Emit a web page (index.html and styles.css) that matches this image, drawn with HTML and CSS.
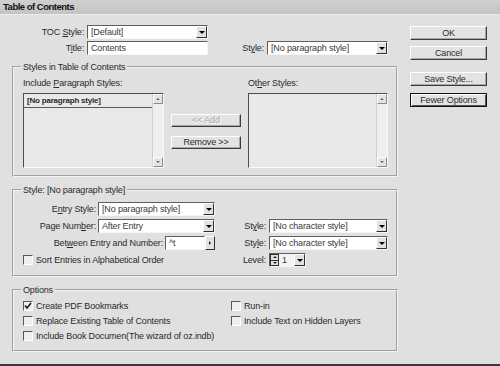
FILE: index.html
```html
<!DOCTYPE html>
<html lang="en">
<head>
    <meta charset="UTF-8">
    <meta name="viewport" content="width=device-width, initial-scale=1.0">
    <title>Table of Contents</title>
    <link rel="stylesheet" href="styles.css">
</head>
<body>
<div class="dialog">
    <div class="titlebar">Table of Contents</div>
    <div class="body">
        <div class="main">
            <!-- TOC style and title -->
            <div class="row">
                <label class="lbl w-toc">TOC <u>S</u>tyle:</label>
                <div class="select w121"><span class="val">[Default]</span><span class="drop"></span></div>
            </div>
            <div class="row">
                <label class="lbl w-toc">T<u>i</u>tle:</label>
                <div class="field w121"><span class="val">Contents</span></div>
                <label class="lbl w-style">St<u>y</u>le:</label>
                <div class="select w121"><span class="val">[No paragraph style]</span><span class="drop"></span></div>
            </div>

            <!-- Styles in Table of Contents -->
            <fieldset class="group g-styles">
                <legend>Styles in Table of Contents</legend>
                <div class="styles-grid">
                    <div class="col">
                        <div class="caption">Include <u>P</u>aragraph Styles:</div>
                        <div class="list">
                            <div class="items">
                                <div class="item">[No paragraph style]</div>
                            </div>
                            <div class="scroll"><span class="arr up"></span><span class="arr down"></span></div>
                        </div>
                    </div>
                    <div class="mid">
                        <button class="btn disabled" type="button">&lt;&lt; Add</button>
                        <button class="btn" type="button">Remove &gt;&gt;</button>
                    </div>
                    <div class="col">
                        <div class="caption">Ot<u>h</u>er Styles:</div>
                        <div class="list">
                            <div class="items"></div>
                            <div class="scroll"><span class="arr up"></span><span class="arr down"></span></div>
                        </div>
                    </div>
                </div>
            </fieldset>

            <!-- Style: [No paragraph style] -->
            <fieldset class="group g-entry">
                <legend>Style: [No paragraph style]</legend>
                <div class="erow">
                    <div class="left">
                        <label class="lbl">E<u>n</u>try Style:</label>
                        <div class="select w117"><span class="val">[No paragraph style]</span><span class="drop"></span></div>
                    </div>
                </div>
                <div class="erow">
                    <div class="left">
                        <label class="lbl">Page Num<u>b</u>er:</label>
                        <div class="select w117"><span class="val">After Entry</span><span class="drop"></span></div>
                    </div>
                    <div class="right">
                        <label class="lbl">St<u>y</u>le:</label>
                        <div class="select w119"><span class="val">[No character style]</span><span class="drop"></span></div>
                    </div>
                </div>
                <div class="erow">
                    <div class="left">
                        <label class="lbl">Bet<u>w</u>een Entry and Number:</label>
                        <div class="field w40"><span class="val">^t</span></div>
                        <span class="flyout"></span>
                    </div>
                    <div class="right">
                        <label class="lbl">Sty<u>l</u>e:</label>
                        <div class="select w119"><span class="val">[No character style]</span><span class="drop"></span></div>
                    </div>
                </div>
                <div class="erow">
                    <div class="left start">
                        <label class="check"><span class="box"></span>Sort Entries in Alphabetical Order</label>
                    </div>
                    <div class="right">
                        <label class="lbl">Level:</label>
                        <div class="level">
                            <span class="spin"><span class="s-up"></span><span class="s-down"></span></span>
                            <span class="val">1</span>
                            <span class="drop"></span>
                        </div>
                    </div>
                </div>
            </fieldset>

            <!-- Options -->
            <fieldset class="group g-opts">
                <legend>Options</legend>
                <div class="opts">
                    <label class="check"><span class="box"><svg width="8" height="8" viewBox="0 0 8 8"><path d="M1 3.5 L3 6 L7 1" fill="none" stroke="#1a1a1a" stroke-width="1.6"/></svg></span>Create PDF Bookmarks</label>
                    <label class="check"><span class="box"></span>Run-in</label>
                    <label class="check"><span class="box"></span>Replace Existing Table of Contents</label>
                    <label class="check"><span class="box"></span>Include Text on Hidden Layers</label>
                    <label class="check"><span class="box"></span>Include Book Documen(The wizard of oz.indb)</label>
                </div>
            </fieldset>
        </div>

        <div class="side">
            <button class="btn" type="button">OK</button>
            <button class="btn cancel" type="button">Cancel</button>
            <button class="btn save" type="button">Save Style...</button>
            <button class="btn default" type="button">Fewer Options</button>
        </div>
    </div>
</div>
</body>
</html>
```

FILE: styles.css
```css
* {
    box-sizing: border-box;
}
body {
    margin: 0;
    background: #e0e0e0;
    font-family: "Liberation Sans", Arial, sans-serif;
    font-size: 9px;
    letter-spacing: -0.15px;
    color: #2a2a2a;
}
u {
    text-decoration: underline;
}
.dialog {
    width: 500px;
    height: 366px;
    background: #e0e0e0;
    border-bottom: 2px solid #3a3a3a;
    overflow: hidden;
}
.titlebar {
    height: 15px;
    line-height: 14px;
    padding-left: 3px;
    font-weight: bold;
    font-size: 9.5px;
    letter-spacing: -0.5px;
    color: #111;
    background: linear-gradient(#d0d0d0, #c3c3c3);
    border-bottom: 1px solid #ececec;
}
.body {
    display: flex;
}
.main {
    margin-left: 12px;
    width: 386px;
    padding-top: 10px;
}
.side {
    margin-left: 12px;
    width: 77px;
    padding-top: 11px;
    display: flex;
    flex-direction: column;
}

/* rows with label + control */
.row {
    display: flex;
    align-items: center;
    height: 14px;
}
.row + .row {
    margin-top: 2px;
}
.lbl {
    text-align: right;
    white-space: nowrap;
}
.w-toc {
    width: 72px;
    margin-right: 3px;
}
.w-style {
    width: 56px;
    margin-right: 3px;
}
.w121 { width: 121px; }
.w119 { width: 119px; }
.w117 { width: 117px; }
.w40 { width: 40px; }

/* inputs and dropdowns */
.select, .field, .level {
    height: 14px;
    display: flex;
    background: #fff;
    border: 1px solid;
    border-color: #5e5e5e #f6f6f6 #f6f6f6 #5e5e5e;
    color: #3a3a3a;
    line-height: 12px;
}
.val {
    flex: 1;
    padding-left: 3px;
    white-space: nowrap;
    overflow: hidden;
}
.drop, .flyout {
    width: 11px;
    flex: none;
    display: flex;
    align-items: center;
    justify-content: center;
    background: #e2e2e2;
    border: 1px solid;
    border-color: #fff #303030 #303030 #fff;
}
.drop::after {
    content: "";
    border-left: 3px solid transparent;
    border-right: 3px solid transparent;
    border-top: 3px solid #000;
}
.flyout {
    width: 10px;
    height: 14px;
}
.flyout::after {
    content: "";
    border-top: 2px solid transparent;
    border-bottom: 2px solid transparent;
    border-left: 2px solid #222;
}

/* group boxes */
.group {
    margin: 0;
    min-width: 0;
    border: 2px groove #f4f4f4;
}
.group legend {
    padding: 0 2px;
    margin-left: -2px;
    line-height: 12px;
}
.g-styles {
    margin-top: 6px;
    padding: 4px 8px 7px 9px;
}
.styles-grid {
    display: grid;
    grid-template-columns: 141px 70px 140px;
    column-gap: 7px;
}
.caption {
    height: 12px;
    line-height: 12px;
    white-space: nowrap;
}
.list {
    margin-top: 4px;
    height: 75px;
    display: flex;
    background: #e9e9e9;
    border: 1px solid;
    border-color: #4e4e4e #fafafa #fafafa #4e4e4e;
}
.items {
    flex: 1;
}
.item {
    height: 14px;
    line-height: 13px;
    padding-left: 3px;
    font-size: 8px;
    font-weight: bold;
    letter-spacing: -0.2px;
    border-bottom: 1px solid #5a5a5a;
}
.scroll {
    width: 11px;
    display: flex;
    flex-direction: column;
    justify-content: space-between;
    background: #efefef;
    border-left: 1px solid #d0d0d0;
}
.arr {
    height: 10px;
    display: flex;
    align-items: center;
    justify-content: center;
    background: #e4e4e4;
    border: 1px solid;
    border-color: #fff #8a8a8a #8a8a8a #fff;
}
.arr.up::after, .s-up::after {
    content: "";
    border-left: 2px solid transparent;
    border-right: 2px solid transparent;
    border-bottom: 2px solid #666;
}
.arr.down::after, .s-down::after {
    content: "";
    border-left: 2px solid transparent;
    border-right: 2px solid transparent;
    border-top: 2px solid #666;
}
.mid {
    padding-top: 37px;
    display: flex;
    flex-direction: column;
}
.mid .btn {
    height: 13px;
}
.mid .btn + .btn {
    margin-top: 9px;
}

/* buttons */
.btn {
    height: 14px;
    width: 100%;
    padding: 0;
    font: inherit;
    letter-spacing: inherit;
    line-height: 11px;
    color: #2a2a2a;
    background: #e3e3e3;
    border: 1px solid;
    border-color: #fff #3a3a3a #3a3a3a #fff;
    box-shadow: inset -1px -1px 0 #a8a8a8;
}
.btn.disabled {
    color: #a8a8a8;
    text-shadow: 1px 1px 0 #fff;
}
.btn.default {
    border-color: #111;
    box-shadow: inset 1px 1px 0 #fff, inset -1px -1px 0 #555;
}
.side .cancel {
    margin-top: 6px;
}
.side .save {
    margin-top: 12px;
}
.side .default {
    margin-top: 7px;
}

/* entry style group */
.g-entry {
    margin-top: 7px;
    padding: 6px 8px 8px 9px;
}
.erow {
    display: flex;
    align-items: center;
    height: 14px;
}
.erow + .erow {
    margin-top: 3px;
}
.left {
    width: 192px;
    display: flex;
    align-items: center;
    justify-content: flex-end;
}
.left.start {
    justify-content: flex-start;
}
.left .lbl {
    margin-right: 2px;
}
.right {
    width: 173px;
    display: flex;
    align-items: center;
}
.right .lbl {
    width: 51px;
    margin-right: 3px;
}
.level {
    width: 37px;
    background: #f3f3f3;
}
.spin {
    width: 9px;
    flex: none;
    display: flex;
    flex-direction: column;
    border: 1px solid #303030;
    background: #e2e2e2;
}
.spin span {
    flex: 1;
    display: flex;
    align-items: center;
    justify-content: center;
}
.s-up {
    border-bottom: 1px solid #303030;
}
.s-up::after, .s-down::after {
    border-bottom-color: #222;
    border-top-color: #222;
}

/* checkboxes */
.check {
    display: flex;
    align-items: center;
    height: 14px;
    white-space: nowrap;
}
.box {
    width: 10px;
    height: 10px;
    flex: none;
    margin-right: 3px;
    display: flex;
    align-items: center;
    justify-content: center;
    background: #eeeeee;
    border: 1px solid;
    border-color: #585858 #fff #fff #585858;
}
.g-opts {
    margin-top: 7px;
    padding: 3px 8px 7px 9px;
}
.opts {
    display: grid;
    grid-template-columns: 208px auto;
    grid-auto-rows: 14px;
    row-gap: 1px;
}
```
